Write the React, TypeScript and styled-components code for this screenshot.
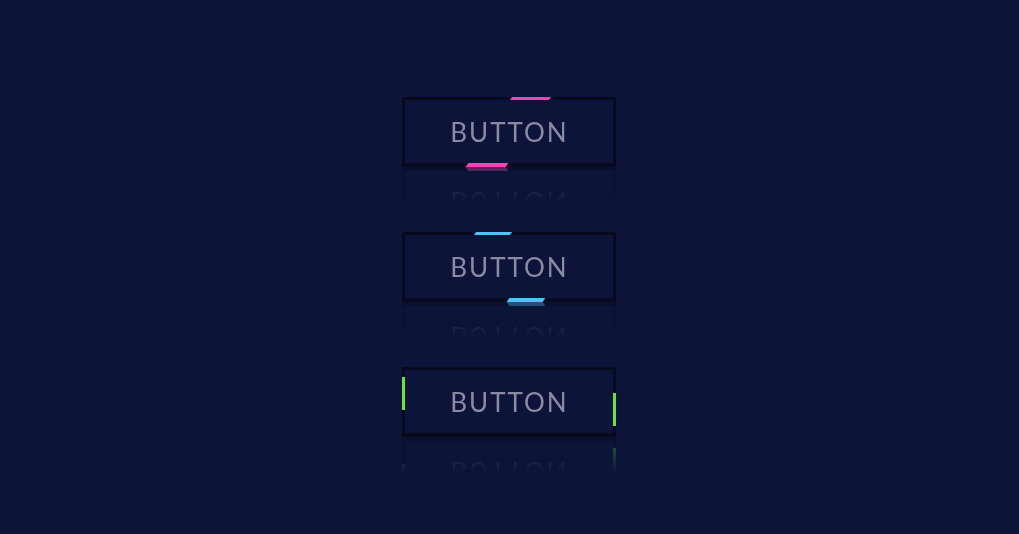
import React from "react";
import styled, { createGlobalStyle } from "styled-components";

const GlobalStyle = createGlobalStyle`
  html, body {
    margin: 0;
    padding: 0;
    background: #0c1539;
  }
  * { box-sizing: border-box; }
`;

const Page = styled.div`
  width: 100vw;
  height: 100vh;
  background: #0c1539;
  display: flex;
  flex-direction: column;
  align-items: center;
  justify-content: center;
  gap: 65px;
`;

const Button = styled.button`
  position: relative;
  width: 214px;
  height: 70px;
  margin-right: 2px;
  background: #0c1539;
  border: 3px solid #060a1e;
  border-bottom-width: 4px;
  font-family: "Lato", "Open Sans", sans-serif;
  font-size: 26px;
  font-weight: 400;
  letter-spacing: 2px;
  color: #8a8aa2;
  padding: 0 0 0 2px;
  cursor: pointer;
  -webkit-box-reflect: below 0px linear-gradient(transparent 48%, rgba(255, 255, 255, 0.36));
`;

type HBarProps = { $color: string; $left: number; $width: number; $top?: boolean };

const HBar = styled.span<HBarProps>`
  position: absolute;
  left: ${(p) => p.$left}px;
  width: ${(p) => p.$width}px;
  ${(p) => (p.$top ? "top: -3px; height: 3px;" : "bottom: -4px; height: 4px;")}
  background: ${(p) => p.$color};
  transform: skewX(-35deg);
`;

type VBarProps = { $color: string; $top: number; $right?: boolean };

const VBar = styled.span<VBarProps>`
  position: absolute;
  top: ${(p) => p.$top}px;
  ${(p) => (p.$right ? "right: -3px;" : "left: -3px;")}
  width: 3px;
  height: 33px;
  background: ${(p) => p.$color};
`;

const PINK = "#f046b4";
const BLUE = "#4fc3f5";
const GREEN = "#69e43c";

export default function App() {
  return (
    <>
      <GlobalStyle />
      <Page>
        <Button>
          BUTTON
          <HBar $color={PINK} $top $left={106} $width={39} />
          <HBar $color={PINK} $left={62} $width={40} />
        </Button>
        <Button>
          BUTTON
          <HBar $color={BLUE} $top $left={70} $width={36} />
          <HBar $color={BLUE} $left={103} $width={36} />
        </Button>
        <Button>
          BUTTON
          <VBar $color={GREEN} $top={7} />
          <VBar $color={GREEN} $top={23} $right />
        </Button>
      </Page>
    </>
  );
}
